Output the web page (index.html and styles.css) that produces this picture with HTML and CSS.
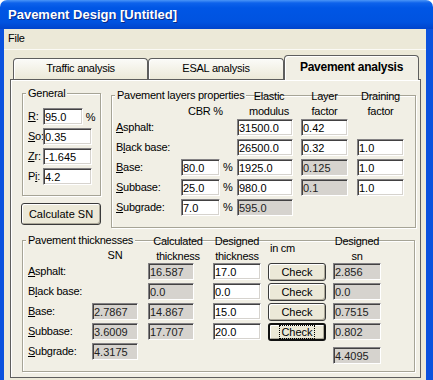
FILE: index.html
```html
<!DOCTYPE html>
<html>

<head>
    <title>Pavement Design</title>
    <meta charset="utf-8">
    <meta name="viewport" content="width=device-width, initial-scale=1.0">
    <link rel="stylesheet" href="styles.css">
</head>

<body>
    <div class="vindue">
        <div class="titel">Pavement Design [Untitled]</div>
        <div class="ramme">
            <div class="menu"><span>File</span></div>

            <nav class="faner">
                <div class="fane">Traffic analysis</div>
                <div class="fane">ESAL analysis</div>
                <div class="fane valgt">Pavement analysis</div>
            </nav>

            <section class="side">
                <div class="top">
                    <div class="venstre">
                        <fieldset class="gruppe general">
                            <legend>General</legend>
                            <div class="felter">
                                <label><u>R</u>:</label>
                                <span><input class="kort" value="95.0"> %</span>
                                <label><u>S</u>o:</label>
                                <span><input value="0.35"></span>
                                <label><u>Z</u>r:</label>
                                <span><input value="-1.645"></span>
                                <label>P<u>i</u>:</label>
                                <span><input value="4.2"></span>
                            </div>
                        </fieldset>
                        <button class="knap beregn">Calculate SN</button>
                    </div>

                    <fieldset class="gruppe lag">
                        <legend>Pavement layers properties</legend>
                        <div class="tabel">
                            <span></span>
                            <span class="hoved cbr">CBR %</span>
                            <span class="hoved elastic">Elastic<br>modulus</span>
                            <span class="hoved faktor">Layer<br>factor</span>
                            <span class="hoved faktor">Draining<br>factor</span>

                            <label><u>A</u>sphalt:</label>
                            <span></span><span></span>
                            <input class="bred" value="31500.0">
                            <input class="mellem" value="0.42">
                            <span></span>

                            <label>B<u>l</u>ack base:</label>
                            <span></span><span></span>
                            <input class="bred" value="26500.0">
                            <input class="mellem" value="0.32">
                            <input class="mellem" value="1.0">

                            <label><u>B</u>ase:</label>
                            <input class="cbrfelt" value="80.0">
                            <span class="pct">%</span>
                            <input class="bred" value="1925.0">
                            <input class="mellem laast" value="0.125" readonly>
                            <input class="mellem" value="1.0">

                            <label><u>S</u>ubbase:</label>
                            <input class="cbrfelt" value="25.0">
                            <span class="pct">%</span>
                            <input class="bred" value="980.0">
                            <input class="mellem laast" value="0.1" readonly>
                            <input class="mellem" value="1.0">

                            <label><u>S</u>ubgrade:</label>
                            <input class="cbrfelt" value="7.0">
                            <span class="pct">%</span>
                            <input class="bred laast" value="595.0" readonly>
                        </div>
                    </fieldset>
                </div>

                <fieldset class="gruppe tykkelse">
                    <legend>Pavement thicknesses</legend>
                    <div class="tabel2">
                        <span></span>
                        <span class="hoved sn">SN</span>
                        <span class="hoved calc">Calculated<br>thickness</span>
                        <span class="hoved design">Designed<br>thickness</span>
                        <span class="hoved cm">in cm</span>
                        <span class="hoved dsn">Designed<br>sn</span>

                        <label><u>A</u>sphalt:</label>
                        <span></span>
                        <input class="laast" value="16.587" readonly>
                        <input class="design" value="17.0">
                        <button class="knap check">Check</button>
                        <input class="dsn laast" value="2.856" readonly>

                        <label>B<u>l</u>ack base:</label>
                        <span></span>
                        <input class="laast" value="0.0" readonly>
                        <input class="design" value="0.0">
                        <button class="knap check">Check</button>
                        <input class="dsn laast" value="0.0" readonly>

                        <label><u>B</u>ase:</label>
                        <input class="laast" value="2.7867" readonly>
                        <input class="laast" value="14.867" readonly>
                        <input class="design" value="15.0">
                        <button class="knap check">Check</button>
                        <input class="dsn laast" value="0.7515" readonly>

                        <label><u>S</u>ubbase:</label>
                        <input class="laast" value="3.6009" readonly>
                        <input class="laast" value="17.707" readonly>
                        <input class="design" value="20.0">
                        <button class="knap check fokus"><span>Check</span></button>
                        <input class="dsn laast" value="0.802" readonly>

                        <label><u>S</u>ubgrade:</label>
                        <input class="laast" value="4.3175" readonly>
                        <span></span><span></span><span></span>
                        <input class="dsn laast total" value="4.4095" readonly>
                    </div>
                </fieldset>
            </section>
        </div>
    </div>
</body>

</html>
```

FILE: styles.css
```css
body {
    margin: 0;
    background: #fff;
    font-family: "Liberation Sans", Arial, sans-serif;
    font-size: 11px;
    letter-spacing: -0.25px;
    color: #000;
}

.vindue {
    width: 433px;
    height: 380px;
    overflow: hidden;
}

.titel {
    height: 29px;
    padding-left: 8px;
    line-height: 30px;
    color: #fff;
    font-weight: bold;
    font-size: 13px;
    letter-spacing: 0;
    border-radius: 7px 7px 0 0;
    background: linear-gradient(#4a95f7 0, #0d62eb 3px, #0056e5 8px, #0053e0 22px, #0044cc 29px);
    text-shadow: 1px 1px #0b2a86;
}

.ramme {
    height: 351px;
    border-left: 4px solid #0b52de;
    border-right: 7px solid #0b52de;
    background: #ece9d8;
}

.menu {
    height: 20px;
    padding-left: 4px;
    line-height: 19px;
    border-bottom: 1px solid #fbfaf5;
}

/* faneblade */
.faner {
    display: flex;
    align-items: flex-end;
    height: 29px;
    padding-left: 9px;
}

.fane {
    box-sizing: border-box;
    width: 135px;
    height: 21px;
    line-height: 19px;
    text-align: center;
    border: 1px solid #5e5e5e;
    border-bottom: none;
    border-radius: 4px 4px 0 0;
    background: linear-gradient(#fbfbf8, #ece9d8);
    box-shadow: inset 1px 1px #fff;
}

.fane:nth-child(2) {
    width: 136px;
}

.valgt {
    position: relative;
    z-index: 1;
    height: 25px;
    margin-bottom: -1px;
    line-height: 23px;
    font-weight: bold;
    font-size: 12px;
    background: #f1efe5;
}

.side {
    box-sizing: border-box;
    width: 411px;
    height: 299px;
    margin-left: 6px;
    padding: 7px 0 0 11px;
    border: 1px solid #5e5e5e;
    background: #f1efe5;
    box-shadow: inset 1px 1px #fff;
}

.top {
    display: flex;
    align-items: flex-start;
}

/* grupper */
.gruppe {
    box-sizing: border-box;
    min-width: 0;
    margin: 0;
    padding: 0;
    border: 1px solid #a6a496;
    box-shadow: inset 1px 1px #fff, 1px 1px #fff;
}

legend {
    margin-left: 3px;
    padding: 0 2px;
    line-height: 13px;
    background: #f1efe5;
}

.general {
    width: 79px;
}

.felter {
    display: grid;
    grid-template-columns: 15px auto;
    grid-auto-rows: 20px;
    padding: 8px 0 7px 5px;
}

.felter label {
    line-height: 17px;
}

.felter input {
    width: 49px;
}

.felter input.kort {
    width: 40px;
}

.beregn {
    width: 80px;
    height: 22px;
    margin: 7px 0 0 -1px;
}

.lag {
    width: 305px;
    margin: 2px 0 0 10px;
}

.tabel {
    display: grid;
    grid-template-columns: 65px 39px 17px 64px 56px 47px;
    grid-template-rows: 30px;
    grid-auto-rows: 20px;
    margin-top: -13px;
    padding: 0 0 8px 4px;
}

.hoved {
    line-height: 15px;
    text-align: center;
}

.cbr {
    grid-column: span 2;
    align-self: end;
    text-align: left;
    padding-left: 7px;
}

.elastic {
    width: 56px;
    margin-left: 4px;
}

.faktor {
    width: 47px;
}

.tabel label,
.tabel2 label {
    line-height: 17px;
}

.pct {
    padding-left: 3px;
    line-height: 17px;
}

.cbrfelt {
    width: 39px;
}

.bred {
    width: 56px;
}

.mellem {
    width: 47px;
}

.tykkelse {
    width: 393px;
    margin-top: 6px;
}

.tabel2 {
    display: grid;
    grid-template-columns: 64px 56px 65px 55px 65px 48px;
    grid-template-rows: 29px;
    grid-auto-rows: 20px;
    margin-top: -13px;
    padding: 0 0 8px 5px;
}

.tabel2 input {
    width: 46px;
}

.tabel2 input.design,
.tabel2 input.dsn {
    width: 48px;
}

.sn {
    width: 46px;
    align-self: end;
}

.calc {
    width: 60px;
}

.design,
.dsn {
    width: 48px;
}

.cm {
    align-self: center;
    text-align: left;
    padding-left: 2px;
}

.total {
    margin-top: 4px;
}

/* felter og knapper */
input {
    box-sizing: border-box;
    height: 17px;
    margin: 0;
    padding: 0 1px;
    font: 11px "Liberation Sans", Arial, sans-serif;
    color: #000;
    border: 1px solid;
    border-color: #848284 #fff #fff #848284;
    box-shadow: inset 1px 1px #424142, inset -1px -1px #d6d3ce;
    background: #fff;
    outline: none;
}

input.laast {
    background: #d6d3ce;
    color: #222;
}

.knap {
    box-sizing: border-box;
    padding: 0;
    font: 11px "Liberation Sans", Arial, sans-serif;
    color: #000;
    background: #ece9d8;
    border: 1px solid #3a3a3a;
    border-radius: 3px;
    box-shadow: inset 1px 1px #fff, inset -1px -1px #aca899;
}

.check {
    width: 58px;
    height: 18px;
}

.fokus {
    border-width: 2px;
    border-color: #111;
}

.fokus span {
    outline: 1px dotted #000;
    padding: 0 1px;
}
```
